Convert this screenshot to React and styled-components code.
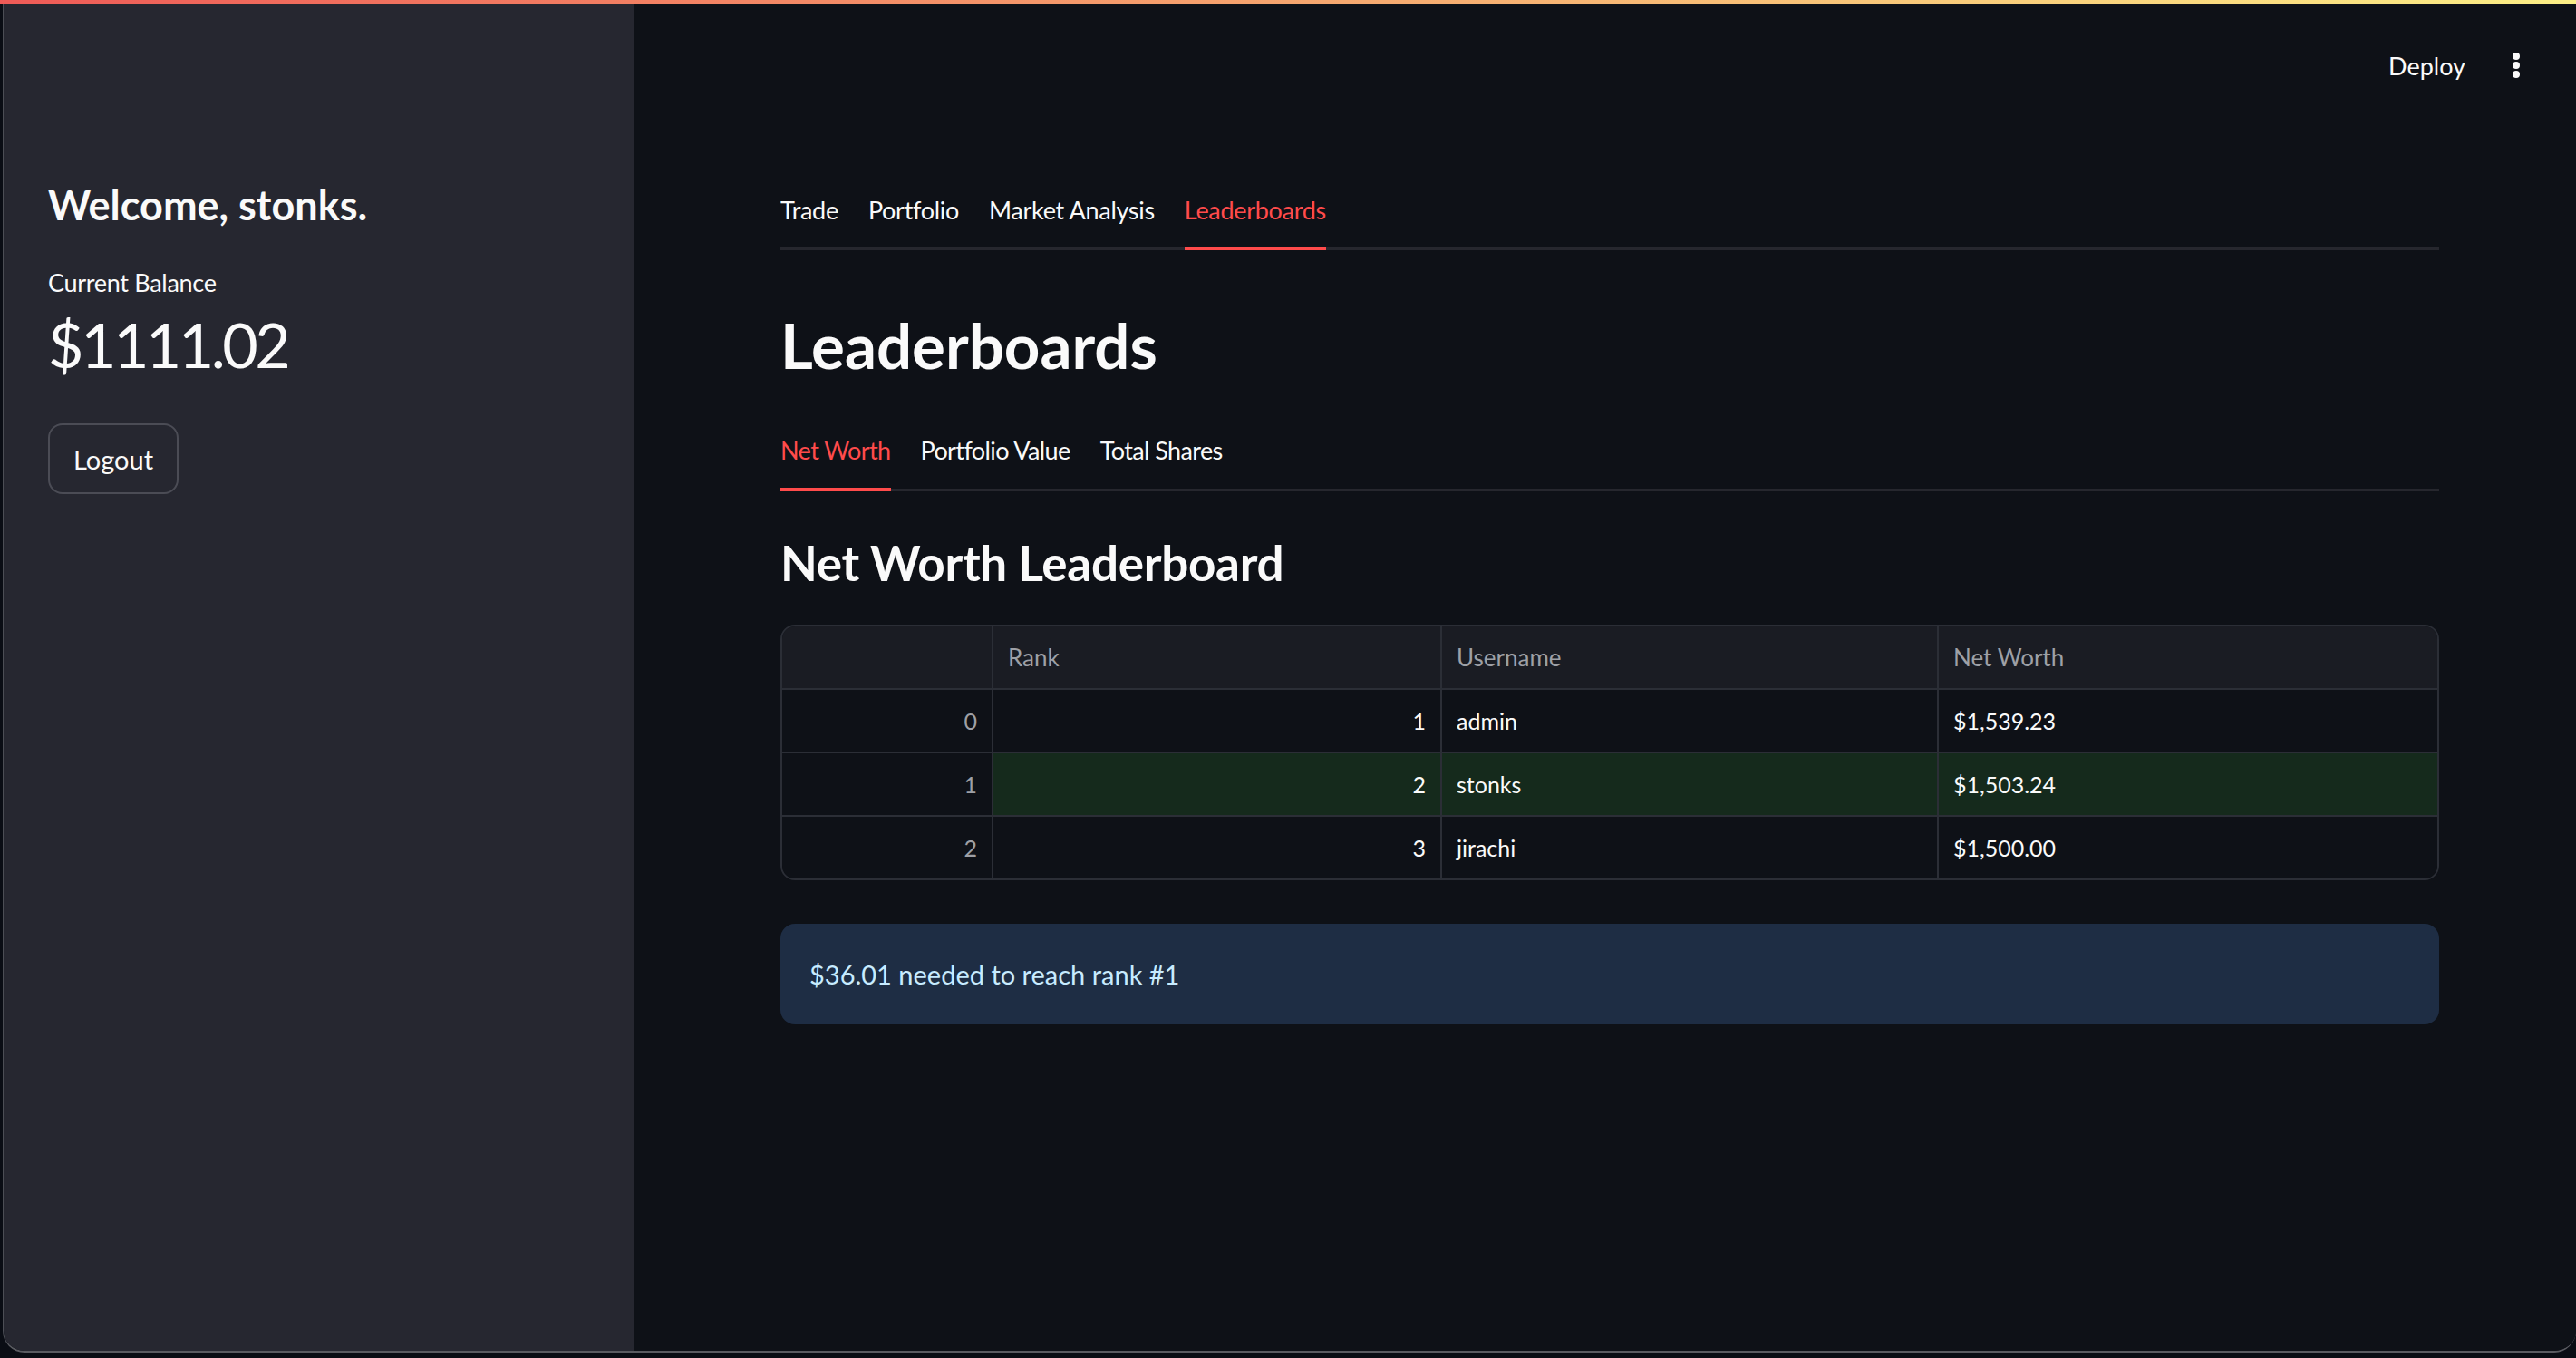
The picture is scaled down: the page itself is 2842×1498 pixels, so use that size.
import React from 'react';
import styled, { createGlobalStyle } from 'styled-components';

const GlobalStyle = createGlobalStyle`
  html, body {
    margin: 0;
    padding: 0;
    background: #0a0d14;
  }
  body {
    font-family: Lato, "Noto Sans", sans-serif;
    color: #fafafa;
  }
  * { box-sizing: border-box; }
`;

const Screen = styled.div`
  width: 2842px;
  height: 1498px;
  display: flex;
  flex-direction: column;
  background: #0a0d14;
  overflow: hidden;
`;

const Decoration = styled.div`
  height: 4px;
  flex-shrink: 0;
  background: linear-gradient(90deg, #ef5b57, #fcef86);
`;

const Window = styled.div`
  height: 1488px;
  margin-left: 3px;
  display: flex;
  border-left: 1px solid #4c4e55;
  border-bottom: 2px solid #5a5b61;
  border-radius: 0 0 24px 24px;
  overflow: hidden;
`;

const Sidebar = styled.aside`
  width: 695px;
  flex-shrink: 0;
  background: #262730;
  padding: 196px 49px 0 49px;
  display: flex;
  flex-direction: column;
  align-items: flex-start;
`;

const Welcome = styled.h3`
  margin: 0;
  font-size: 45px;
  line-height: 53px;
  font-weight: 700;
`;

const MetricLabel = styled.div`
  margin-top: 42px;
  font-size: 27px;
  line-height: 34px;
  letter-spacing: -0.3px;
`;

const MetricValue = styled.div`
  margin-top: 9px;
  font-size: 68px;
  line-height: 83px;
  font-weight: 400;
  letter-spacing: -3.5px;
`;

const Button = styled.button`
  margin-top: 46px;
  width: 144px;
  height: 78px;
  border: 2px solid #4b4c55;
  border-radius: 16px;
  background: transparent;
  color: #fafafa;
  font-family: inherit;
  font-size: 29px;
  padding: 0;
`;

const Main = styled.main`
  flex: 1;
  background: #0e1117;
  display: flex;
  flex-direction: column;
`;

const Header = styled.header`
  height: 136px;
  flex-shrink: 0;
  display: flex;
  justify-content: flex-end;
  align-items: center;
  gap: 36px;
  padding-right: 46px;
`;

const DeployButton = styled.button`
  background: none;
  border: none;
  padding: 0;
  color: #fafafa;
  font-family: inherit;
  font-size: 27px;
`;

const Content = styled.div`
  width: 1830px;
  margin-left: 162px;
  margin-top: 72px;
`;

const TabList = styled.div`
  display: flex;
  gap: 33px;
  border-bottom: 3px solid #26272e;
  margin-top: ${({ $top }) => $top || 0}px;
`;

const Tab = styled.div`
  font-size: ${({ $size }) => $size}px;
  letter-spacing: ${({ $track }) => $track || 0}px;
  line-height: 40px;
  padding-bottom: ${({ $pad }) => $pad}px;
  margin-bottom: -3px;
  border-bottom: 4px solid ${({ $active }) => ($active ? '#ff4b4b' : 'transparent')};
  color: ${({ $active }) => ($active ? '#ff4b4b' : '#fafafa')};
`;

const Title = styled.h1`
  margin: 63px 0 0;
  font-size: 69px;
  line-height: 83px;
  font-weight: 700;
`;

const Subtitle = styled.h3`
  margin: 46px 0 0;
  font-size: 53px;
  line-height: 65px;
  font-weight: 700;
  letter-spacing: -0.3px;
`;

const Table = styled.div`
  margin-top: 36px;
  display: grid;
  grid-template-columns: 233px 495px 548px 1fr;
  border: 2px solid #2b2e36;
  border-radius: 16px;
  overflow: hidden;
`;

const Cell = styled.div`
  height: ${({ $lastRow }) => ($lastRow ? 68 : 70)}px;
  display: flex;
  align-items: center;
  justify-content: ${({ $right }) => ($right ? 'flex-end' : 'flex-start')};
  padding: 0 16px;
  font-size: ${({ $head }) => ($head ? 26 : 25)}px;
  color: ${({ $muted }) => ($muted ? '#9ea0a6' : '#fafafa')};
  background: ${({ $head, $hl }) => ($head ? '#1a1c23' : $hl ? '#152a1c' : '#0e1117')};
  border-right: ${({ $lastCol }) => ($lastCol ? 'none' : '2px solid #2b2e36')};
  border-bottom: ${({ $lastRow }) => ($lastRow ? 'none' : '2px solid #2b2e36')};
`;

const Info = styled.div`
  margin-top: 48px;
  height: 111px;
  display: flex;
  align-items: center;
  padding: 0 32px;
  border-radius: 16px;
  background: #1e2d44;
  color: #c7ebff;
  font-size: 29px;
`;

const rows = [
  { rank: 1, user: 'admin', worth: '$1,539.23' },
  { rank: 2, user: 'stonks', worth: '$1,503.24', me: true },
  { rank: 3, user: 'jirachi', worth: '$1,500.00' },
];

const KebabIcon = () => (
  <svg width="40" height="40" viewBox="0 0 40 40">
    <circle cx="20" cy="10" r="4" fill="#fafafa" />
    <circle cx="20" cy="20" r="4" fill="#fafafa" />
    <circle cx="20" cy="30" r="4" fill="#fafafa" />
  </svg>
);

export default function App() {
  const mainTabs = ['Trade', 'Portfolio', 'Market Analysis', 'Leaderboards'];
  const boardTabs = ['Net Worth', 'Portfolio Value', 'Total Shares'];

  return (
    <>
      <GlobalStyle />
      <Screen>
        <Decoration />
        <Window>
          <Sidebar>
            <Welcome>Welcome, stonks.</Welcome>
            <MetricLabel>Current Balance</MetricLabel>
            <MetricValue>$1111.02</MetricValue>
            <Button>Logout</Button>
          </Sidebar>
          <Main>
            <Header>
              <DeployButton>Deploy</DeployButton>
              <KebabIcon />
            </Header>
            <Content>
              <TabList>
                {mainTabs.map((t) => (
                  <Tab key={t} $size={27} $track={-0.3} $pad={20} $active={t === 'Leaderboards'}>
                    {t}
                  </Tab>
                ))}
              </TabList>
              <Title>Leaderboards</Title>
              <TabList $top={55}>
                {boardTabs.map((t) => (
                  <Tab key={t} $size={27} $track={-0.6} $pad={21} $active={t === 'Net Worth'}>
                    {t}
                  </Tab>
                ))}
              </TabList>
              <Subtitle>Net Worth Leaderboard</Subtitle>
              <Table>
                <Cell $head />
                <Cell $head $muted>Rank</Cell>
                <Cell $head $muted>Username</Cell>
                <Cell $head $muted $lastCol>Net Worth</Cell>
                {rows.map((r, i) => {
                  const last = i === rows.length - 1;
                  return (
                    <React.Fragment key={r.user}>
                      <Cell $right $muted $lastRow={last}>{i}</Cell>
                      <Cell $right $hl={r.me} $lastRow={last}>{r.rank}</Cell>
                      <Cell $hl={r.me} $lastRow={last}>{r.user}</Cell>
                      <Cell $hl={r.me} $lastRow={last} $lastCol>{r.worth}</Cell>
                    </React.Fragment>
                  );
                })}
              </Table>
              <Info>$36.01 needed to reach rank #1</Info>
            </Content>
          </Main>
        </Window>
      </Screen>
    </>
  );
}
